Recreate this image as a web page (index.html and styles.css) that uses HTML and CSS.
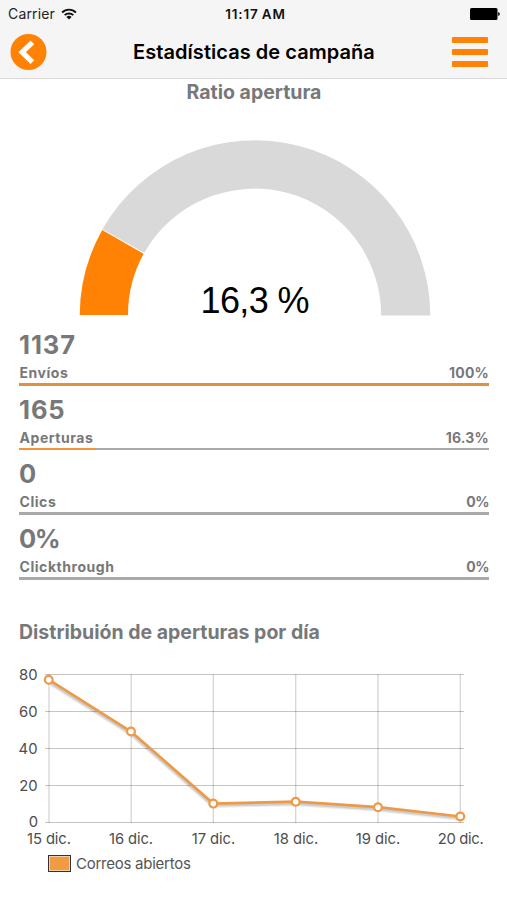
FILE: index.html
```
<!DOCTYPE html>
<html lang="es">
<head>
  <meta charset="UTF-8">
  <meta name="viewport" content="width=device-width, initial-scale=1">
  <title>Estadísticas de campaña</title>
  <link rel="stylesheet" href="styles.css">
</head>
<body>
  <!-- Header -->
  <header class="header">
    <div class="status-bar">
      <div class="carrier">
        <span>Carrier</span>
        <svg width="16" height="12" viewBox="0 0 16 12">
          <g fill="none" stroke="#111" stroke-width="1.9">
            <path d="M1.1 4.5 A9.8 9.8 0 0 1 14.9 4.5"/>
            <path d="M3.7 7.2 A6.1 6.1 0 0 1 12.3 7.2"/>
          </g>
          <path d="M5.4 9 A3.7 3.7 0 0 1 10.6 9 L8 11.6 Z" fill="#111"/>
        </svg>
      </div>
      <span class="time">11:17 AM</span>
      <svg class="battery" width="30" height="12" viewBox="0 0 30 12">
        <rect x="0" y="0" width="27.5" height="12" rx="1.5"/>
        <path d="M28.2 4 Q29.8 4.5 29.8 6 Q29.8 7.5 28.2 8 Z"/>
      </svg>
    </div>
    <nav class="navbar">
      <a href="#" class="back-btn" aria-label="Volver">
        <svg width="37" height="36" viewBox="0 0 37 36">
          <circle cx="18.5" cy="18" r="18" fill="#ff8205"/>
          <path d="M22.4 8.3 L12.1 18.2 L22.4 28.2" fill="none" stroke="#fff" stroke-width="5.2"/>
        </svg>
      </a>
      <h1>Estadísticas de campaña</h1>
      <a href="#" class="menu-btn" aria-label="Menú">
        <span></span>
        <span></span>
        <span></span>
      </a>
    </nav>
  </header>

  <main>
    <!-- Open ratio gauge -->
    <section class="ratio">
      <h2>Ratio apertura</h2>
      <svg class="gauge" width="352" height="188" viewBox="79 138 352 188">
        <path d="M102.4 229.3 A175.3 175.3 0 0 1 430.3 315.5 H381.2 A126.7 126.7 0 0 0 144.3 252.8 Z" fill="#d9d9d9"/>
        <path d="M79.7 315 A175.3 175.3 0 0 1 102.2 230 L143.6 253.8 A127 127 0 0 0 128 315 Z" fill="#ff8205"/>
        <text x="200.5" y="312.5" textLength="109" lengthAdjust="spacing">16,3 %</text>
      </svg>
    </section>

    <!-- Campaign totals -->
    <section class="stats">
      <div class="stat">
        <strong class="count">1137</strong>
        <div class="stat-row"><span class="label">Envíos</span><span>100%</span></div>
        <div class="bar"><div class="bar-fill full" style="width: 100%"></div></div>
      </div>
      <div class="stat">
        <strong class="count">165</strong>
        <div class="stat-row"><span class="label">Aperturas</span><span>16.3%</span></div>
        <div class="bar"><div class="bar-fill" style="width: 16.3%"></div></div>
      </div>
      <div class="stat">
        <strong class="count">0</strong>
        <div class="stat-row"><span class="label">Clics</span><span class="zero">0%</span></div>
        <div class="bar"><div class="bar-fill" style="width: 0%"></div></div>
      </div>
      <div class="stat">
        <strong class="rate">0%</strong>
        <div class="stat-row"><span class="label">Clickthrough</span><span class="zero">0%</span></div>
        <div class="bar"><div class="bar-fill" style="width: 0%"></div></div>
      </div>
    </section>

    <!-- Opens per day -->
    <section class="distribution">
      <h2>Distribuión de aperturas por día</h2>
      <svg class="chart" width="507" height="196" viewBox="0 654 507 196">
        <g class="grid">
          <path d="M45 674.5H464 M45 711.5H464 M45 748.5H464 M45 785.5H464 M45 822.5H464"/>
          <path class="vertical" d="M49 674V823 M131.2 674V823 M213.3 674V823 M295.7 674V823 M378 674V823 M460.3 674V823"/>
        </g>
        <g class="axis-y">
          <text x="37.5" y="679.5">80</text>
          <text x="37.5" y="716.5">60</text>
          <text x="37.5" y="753.7">40</text>
          <text x="37.5" y="790.5">20</text>
          <text x="38" y="827">0</text>
        </g>
        <g class="axis-x">
          <text x="49" y="843.5" textLength="44">15 dic.</text>
          <text x="131" y="843.5" textLength="44">16 dic.</text>
          <text x="213.5" y="843.5" textLength="43.5">17 dic.</text>
          <text x="296" y="843.5" textLength="44.5">18 dic.</text>
          <text x="378" y="843.5" textLength="44.5">19 dic.</text>
          <text x="460.7" y="843.5" textLength="46">20 dic.</text>
        </g>
        <polyline class="shadow wide" points="48.2,682.2 130.5,734 212.8,806 295.7,804.2 378,809.7 460.3,819"/>
        <polyline class="shadow" points="48.2,681.5 130.5,733.3 212.8,805.5 295.7,803.6 378,809.2 460.3,818.2"/>
        <polyline class="line" points="48.7,679.7 131,731.5 213.3,803.6 295.7,801.7 378,807.2 460.3,816.5"/>
        <g class="points">
          <circle cx="48.7" cy="679.7" r="3.9"/>
          <circle cx="131" cy="731.5" r="3.9"/>
          <circle cx="213.3" cy="803.6" r="3.9"/>
          <circle cx="295.7" cy="801.7" r="3.9"/>
          <circle cx="378" cy="807.2" r="3.9"/>
          <circle cx="460.3" cy="816.5" r="3.9"/>
        </g>
      </svg>
      <div class="legend">
        <span class="swatch"></span>
        <span>Correos abiertos</span>
      </div>
    </section>
  </main>
</body>
</html>
```
FILE: styles.css
```
/* Global reset and styling */
* {
  margin: 0;
  padding: 0;
  box-sizing: border-box;
}
body {
  font-family: Inter, "Liberation Sans", sans-serif;
  background-color: #fff;
  color: #77787a;
}
svg {
  display: block;
}
h2 {
  font-size: 19.5px;
  font-weight: 650;
  line-height: 24px;
}
/* Header */
.header {
  height: 79px;
  background-color: #f5f5f5;
  border-bottom: 1px solid #d8d8d8;
}
.status-bar {
  display: grid;
  grid-template-columns: 1fr auto 1fr;
  align-items: center;
  height: 27px;
  padding: 0 7px 0 8px;
  font-size: 14px;
  color: #222;
}
.carrier {
  display: flex;
  align-items: center;
  gap: 6px;
  letter-spacing: 0.15px;
}
.time {
  padding-left: 3px;
  font-size: 13.5px;
  font-weight: 600;
  letter-spacing: 0.85px;
  word-spacing: -1px;
  color: #111;
}
.battery {
  justify-self: end;
}
/* Navigation bar */
.navbar {
  display: grid;
  grid-template-columns: 37px 1fr 36px;
  align-items: center;
  height: 50px;
  padding: 0 19px 0 10px;
}
.navbar h1 {
  padding-left: 9px;
  text-align: center;
  font-size: 20px;
  font-weight: 600;
  letter-spacing: 0.05px;
  color: #000;
}
.menu-btn {
  display: flex;
  flex-direction: column;
  gap: 6px;
}
.menu-btn span {
  height: 6px;
  border-radius: 1px;
  background-color: #ff8205;
}
/* Gauge */
.ratio h2 {
  padding: 1px 0 0 1px;
  text-align: center;
}
.gauge {
  margin: 34px 0 0 79px;
}
.gauge text {
  font-family: "Liberation Sans", Arial, sans-serif;
  font-size: 36px;
  fill: #000;
}
/* Stats */
.stats {
  padding: 3px 18px 0 19px;
}
.stat {
  height: 64.7px;
}
.stat strong {
  display: block;
  font-size: 25.5px;
  font-weight: 650;
  line-height: 32px;
}
.stat .count {
  letter-spacing: 0.9px;
}
.stat .rate {
  letter-spacing: -1.5px;
}
.stat-row {
  display: flex;
  justify-content: space-between;
  font-size: 14px;
  font-weight: 650;
  line-height: 24px;
  letter-spacing: 0.2px;
}
.stat-row .label {
  padding-left: 0.5px;
  letter-spacing: 0.55px;
}
.stat-row .zero {
  letter-spacing: -0.4px;
}
.bar {
  height: 2.5px;
  margin-top: -2px;
  background-color: #a9a9ab;
}
.bar-fill {
  height: 100%;
  background-color: #f5932f;
}
.bar-fill.full {
  background-color: #df9040;
}
/* Distribution chart */
.distribution h2 {
  padding: 32px 0 0 19px;
}
.chart {
  margin-top: 10px;
}
.grid path {
  fill: none;
  stroke: #000;
  stroke-opacity: 0.23;
}
.grid .vertical {
  stroke-opacity: 0.17;
  stroke-width: 1.3;
}
.chart text {
  font-size: 14.8px;
  fill: #4d4d4d;
}
.axis-y text {
  text-anchor: end;
}
.axis-x text {
  text-anchor: middle;
}
.line {
  fill: none;
  stroke: #ed9a48;
  stroke-width: 2.7;
}
.shadow {
  fill: none;
  stroke: #000;
  stroke-opacity: 0.12;
  stroke-width: 2.7;
}
.shadow.wide {
  stroke-opacity: 0.08;
  stroke-width: 4;
}
.points circle {
  fill: #fff;
  stroke: #ed9a48;
  stroke-width: 2.2;
}
.legend {
  display: flex;
  align-items: center;
  gap: 5px;
  padding-left: 48px;
  height: 27px;
  font-size: 15px;
  letter-spacing: -0.25px;
  color: #555;
}
.swatch {
  width: 23px;
  height: 17px;
  border: 1px solid #333;
  background-color: #f29b45;
  box-shadow: inset 0 0 0 1px #f6cfa6;
}
```
